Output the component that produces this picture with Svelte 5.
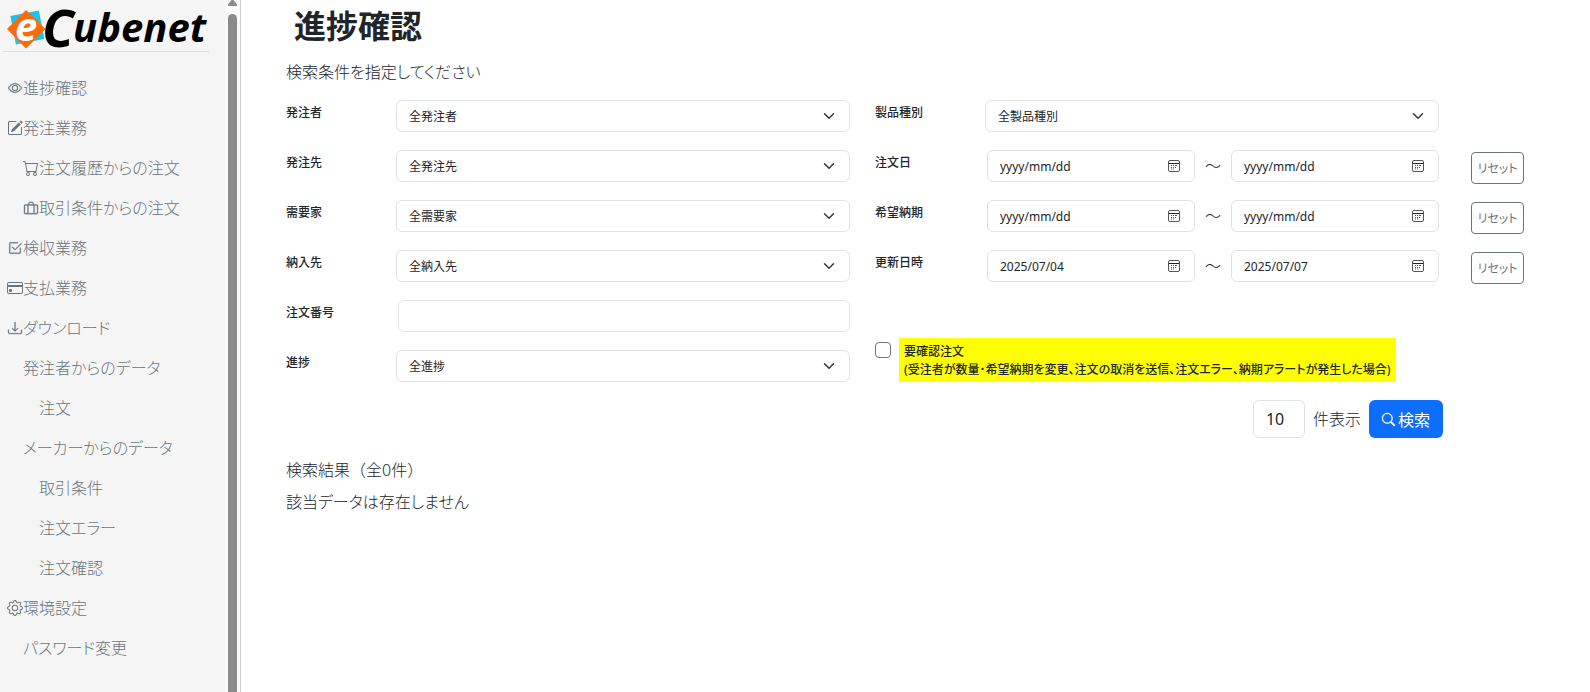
<script>
    let menu = [
        { name: '進捗確認', icon: 'eye', level: 0 },
        { name: '発注業務', icon: 'pencil', level: 0 },
        { name: '注文履歴からの注文', icon: 'cart', level: 1 },
        { name: '取引条件からの注文', icon: 'suitcase', level: 1 },
        { name: '検収業務', icon: 'check', level: 0 },
        { name: '支払業務', icon: 'card', level: 0 },
        { name: 'ダウンロード', icon: 'download', level: 0 },
        { name: '発注者からのデータ', level: 1 },
        { name: '注文', level: 2 },
        { name: 'メーカーからのデータ', level: 1 },
        { name: '取引条件', level: 2 },
        { name: '注文エラー', level: 2 },
        { name: '注文確認', level: 2 },
        { name: '環境設定', icon: 'gear', level: 0 },
        { name: 'パスワード変更', level: 1 }
    ];

    let icons = {
        eye: [
            'M16 8s-3-5.5-8-5.5S0 8 0 8s3 5.5 8 5.5S16 8 16 8M1.173 8a13 13 0 0 1 1.66-2.043C4.12 4.668 5.88 3.5 8 3.5s3.879 1.168 5.168 2.457A13 13 0 0 1 14.828 8q-.086.13-.195.288c-.335.48-.83 1.12-1.465 1.755C11.879 11.332 10.119 12.5 8 12.5s-3.879-1.168-5.168-2.457A13 13 0 0 1 1.172 8z',
            'M8 5.5a2.5 2.5 0 1 0 0 5 2.5 2.5 0 0 0 0-5M4.5 8a3.5 3.5 0 1 1 7 0 3.5 3.5 0 0 1-7 0'
        ],
        pencil: [
            'M15.502 1.94a.5.5 0 0 1 0 .706L14.459 3.69l-2-2L13.502.646a.5.5 0 0 1 .707 0l1.293 1.293zm-1.75 2.456-2-2L4.939 9.21a.5.5 0 0 0-.121.196l-.805 2.414a.25.25 0 0 0 .316.316l2.414-.805a.5.5 0 0 0 .196-.12l6.813-6.814z',
            'M1 13.5A1.5 1.5 0 0 0 2.5 15h11a1.5 1.5 0 0 0 1.5-1.5v-6a.5.5 0 0 0-1 0v6a.5.5 0 0 1-.5.5h-11a.5.5 0 0 1-.5-.5v-11a.5.5 0 0 1 .5-.5H9a.5.5 0 0 0 0-1H2.5A1.5 1.5 0 0 0 1 2.5z'
        ],
        cart: [
            'M0 1.5A.5.5 0 0 1 .5 1H2a.5.5 0 0 1 .485.379L2.89 3H14.5a.5.5 0 0 1 .491.592l-1.5 8A.5.5 0 0 1 13 12H4a.5.5 0 0 1-.491-.408L2.01 3.607 1.61 2H.5a.5.5 0 0 1-.5-.5M3.102 4l1.313 7h8.17l1.313-7zM5 12a2 2 0 1 0 0 4 2 2 0 0 0 0-4m7 0a2 2 0 1 0 0 4 2 2 0 0 0 0-4m-7 1a1 1 0 1 1 0 2 1 1 0 0 1 0-2m7 0a1 1 0 1 1 0 2 1 1 0 0 1 0-2'
        ],
        suitcase: [
            'M5 4V3a2 2 0 0 1 2-2h2a2 2 0 0 1 2 2v1h3.500A1.500 1.500 0 0 1 16 5.500v8a1.500 1.500 0 0 1-1.500 1.500h-13A1.500 1.500 0 0 1 0 13.500v-8A1.500 1.500 0 0 1 1.500 4zm1 0h4V3a1 1 0 0 0-1-1H7a1 1 0 0 0-1 1zM1.500 5a.5.5 0 0 0-.5.5v8a.5.5 0 0 0 .5.5H4V5zM5 5v9h6V5zm7 0v9h2.500a.5.5 0 0 0 .5-.5v-8a.5.5 0 0 0-.5-.5z'
        ],
        check: [
            'M3 14.500A1.500 1.500 0 0 1 1.500 13V3A1.500 1.500 0 0 1 3 1.500h8a.5.5 0 0 1 0 1H3a.5.5 0 0 0-.5.5v10a.5.5 0 0 0 .5.5h10a.5.5 0 0 0 .5-.5V8a.5.5 0 0 1 1 0v5a1.500 1.500 0 0 1-1.500 1.500z',
            'm8.354 10.354 7-7a.5.5 0 0 0-.708-.708L8 9.293 5.354 6.646a.5.5 0 1 0-.708.708l3 3a.5.5 0 0 0 .708 0'
        ],
        card: [
            'M0 4a2 2 0 0 1 2-2h12a2 2 0 0 1 2 2v8a2 2 0 0 1-2 2H2a2 2 0 0 1-2-2zm2-1a1 1 0 0 0-1 1v1h14V4a1 1 0 0 0-1-1zm13 4H1v5a1 1 0 0 0 1 1h12a1 1 0 0 0 1-1z',
            'M2 10a1 1 0 0 1 1-1h1a1 1 0 0 1 1 1v1a1 1 0 0 1-1 1H3a1 1 0 0 1-1-1z'
        ],
        download: [
            'M.5 9.900a.5.5 0 0 1 .5.5v2.500a1 1 0 0 0 1 1h12a1 1 0 0 0 1-1v-2.500a.5.5 0 0 1 1 0v2.500a2 2 0 0 1-2 2H2a2 2 0 0 1-2-2v-2.500a.5.5 0 0 1 .5-.5',
            'M7.646 11.854a.5.5 0 0 0 .708 0l3-3a.5.5 0 0 0-.708-.708L8.500 10.293V1.500a.5.5 0 0 0-1 0v8.793L5.354 8.146a.5.5 0 1 0-.708.708z'
        ],
        gear: [
            'M8 4.754a3.246 3.246 0 1 0 0 6.492 3.246 3.246 0 0 0 0-6.492M5.754 8a2.246 2.246 0 1 1 4.492 0 2.246 2.246 0 0 1-4.492 0',
            'M9.796 1.343c-.527-1.790-3.065-1.790-3.592 0l-.094.319a.873.873 0 0 1-1.255.520l-.292-.160c-1.640-.892-3.433.902-2.540 2.541l.159.292a.873.873 0 0 1-.520 1.255l-.319.094c-1.790.527-1.790 3.065 0 3.592l.319.094a.873.873 0 0 1 .520 1.255l-.160.292c-.892 1.640.901 3.434 2.541 2.540l.292-.159a.873.873 0 0 1 1.255.520l.094.319c.527 1.790 3.065 1.790 3.592 0l.094-.319a.873.873 0 0 1 1.255-.520l.292.160c1.640.893 3.434-.902 2.540-2.541l-.159-.292a.873.873 0 0 1 .520-1.255l.319-.094c1.790-.527 1.790-3.065 0-3.592l-.319-.094a.873.873 0 0 1-.520-1.255l.160-.292c.893-1.640-.902-3.433-2.541-2.540l-.292.159a.873.873 0 0 1-1.255-.520zm-2.633.283c.246-.835 1.428-.835 1.674 0l.094.319a1.873 1.873 0 0 0 2.693 1.115l.291-.160c.764-.415 1.600.420 1.184 1.185l-.159.292a1.873 1.873 0 0 0 1.116 2.692l.318.094c.835.246.835 1.428 0 1.674l-.319.094a1.873 1.873 0 0 0-1.115 2.693l.160.291c.415.764-.420 1.600-1.185 1.184l-.291-.159a1.873 1.873 0 0 0-2.693 1.116l-.094.318c-.246.835-1.428.835-1.674 0l-.094-.319a1.873 1.873 0 0 0-2.692-1.115l-.292.160c-.764.415-1.600-.420-1.184-1.185l.159-.291A1.873 1.873 0 0 0 1.945 8.930l-.319-.094c-.835-.246-.835-1.428 0-1.674l.319-.094A1.873 1.873 0 0 0 3.060 4.377l-.160-.292c-.415-.764.420-1.600 1.185-1.184l.292.159a1.873 1.873 0 0 0 2.692-1.115z'
        ]
    };

    let leftFields = [
        { id: 'orderer', label: '発注者', option: '全発注者' },
        { id: 'supplier', label: '発注先', option: '全発注先' },
        { id: 'customer', label: '需要家', option: '全需要家' },
        { id: 'delivery', label: '納入先', option: '全納入先' },
        { id: 'orderNo', label: '注文番号' },
        { id: 'progress', label: '進捗', option: '全進捗' }
    ];

    let dates = $state([
        { id: 'orderDate', label: '注文日', from: '', to: '' },
        { id: 'dueDate', label: '希望納期', from: '', to: '' },
        { id: 'updated', label: '更新日時', from: '2025/07/04', to: '2025/07/07' }
    ]);

    let orderNo = $state('');
    let needsCheck = $state(false);
    let perPage = $state('10');

    function reset(row) {
        row.from = '';
        row.to = '';
    }
</script>

{#snippet calendarButton(label)}
    <button type="button" class="calendar" aria-label={label}>
        <svg viewBox="0 0 12 12" width="12" height="12">
            <rect x="0.500" y="0.500" width="11" height="11" rx="1.500" fill="none" stroke="#555" />
            <path d="M1 3.500h10" stroke="#222" />
            <path d="M3 5.500h1m1 0h1m1 0h2M3 7.500h1m1 0h1m1 0h1M3 9h1m1 0h1" stroke="#555" />
        </svg>
    </button>
{/snippet}

<div class="page">
    <aside>
        <div class="menu-area">
            <a class="logo" href="#top" aria-label="eCubenet">
                <svg viewBox="0 0 206 50" width="206" height="50">
                    <rect x="10" y="13" width="29" height="29" fill="#1fc0ea" transform="rotate(-11 24 28)" />
                    <path d="M23 10 42.500 29 23 48.500 4 29z" fill="#ff6a06" />
                    <text x="12" y="41" font-size="40" fill="#fff">e</text>
                    <text x="39" y="47" font-size="52">C</text>
                    <text x="70" y="42" font-size="40">ubenet</text>
                </svg>
            </a>
            <nav>
                <ul>
                    {#each menu as item}
                        <li class="level{item.level}">
                            <a href="#menu">
                                {#if item.icon}
                                    <svg class={item.icon} viewBox="0 0 16 16" width="16" height="16" fill="currentColor">
                                        {#each icons[item.icon] as d}
                                            <path {d} fill-rule={item.icon === 'suitcase' ? 'evenodd' : 'nonzero'} />
                                        {/each}
                                    </svg>
                                {/if}
                                <span>{item.name}</span>
                            </a>
                        </li>
                    {/each}
                </ul>
            </nav>
        </div>
        <div class="scrollbar">
            <svg viewBox="0 0 9 6" width="9" height="6"><path d="M3.500 0h2L9 4.500V6H0V4.500z" fill="#8b8b8b" /></svg>
            <div class="thumb"></div>
        </div>
    </aside>

    <main>
        <h1>進捗確認</h1>
        <p class="lead">検索条件を指定してください</p>

        <form onsubmit={(event) => event.preventDefault()}>
            <div class="columns">
                <div class="column">
                    {#each leftFields as field}
                        <div class="row">
                            <label for={field.id}>{field.label}</label>
                            {#if field.option}
                                <select id={field.id}>
                                    <option>{field.option}</option>
                                </select>
                            {:else}
                                <div class="inset">
                                    <input id={field.id} class="box" type="text" bind:value={orderNo} />
                                </div>
                            {/if}
                        </div>
                    {/each}
                </div>

                <div class="column">
                    <div class="row with-reset">
                        <label for="productType">製品種別</label>
                        <select id="productType">
                            <option>全製品種別</option>
                        </select>
                    </div>
                    {#each dates as row}
                        <div class="row with-reset">
                            <label for={row.id}>{row.label}</label>
                            <div class="inset range">
                                <div class="date box">
                                    <input id={row.id} type="text" placeholder="yyyy/mm/dd" bind:value={row.from} />
                                    {@render calendarButton(row.label + ' 開始日')}
                                </div>
                                <span class="tilde">～</span>
                                <div class="date box">
                                    <input type="text" aria-label={row.label + ' 終了日'} placeholder="yyyy/mm/dd" bind:value={row.to} />
                                    {@render calendarButton(row.label + ' 終了日を選択')}
                                </div>
                            </div>
                            <button type="button" class="reset" onclick={() => reset(row)}>リセット</button>
                        </div>
                    {/each}
                    <div class="confirm">
                        <input id="needsCheck" type="checkbox" bind:checked={needsCheck} />
                        <label for="needsCheck">
                            要確認注文<br />
                            (受注者が数量･希望納期を変更、注文の取消を送信、注文エラー、納期アラートが発生した場合)
                        </label>
                    </div>
                </div>
            </div>

            <div class="actions">
                <input id="perPage" type="text" bind:value={perPage} />
                <label for="perPage">件表示</label>
                <button type="submit" class="search">
                    <svg viewBox="0 0 16 16" width="13" height="13" fill="currentColor" stroke="currentColor" stroke-width="0.500">
                        <path d="M11.742 10.344a6.500 6.500 0 1 0-1.397 1.398h-.001q.044.060.098.115l3.850 3.850a1 1 0 0 0 1.415-1.414l-3.850-3.850a1 1 0 0 0-.115-.100zM12 6.500a5.500 5.500 0 1 1-11 0 5.500 5.500 0 0 1 11 0" />
                    </svg>
                    <span>検索</span>
                </button>
            </div>
        </form>

        <section>
            <p class="count">検索結果（全0件）</p>
            <p>該当データは存在しません</p>
        </section>
    </main>
</div>

<style>
    :global(body) {
        background: #fff;
    }
    .page {
        display: flex;
        min-height: 100vh;
        font-family: 'Noto Sans', 'Noto Sans CJK JP', sans-serif;
        font-size: 16px;
        font-weight: 300;
        line-height: 24px;
        color: #212529;
        font-feature-settings: 'palt';
    }
    .page :is(input, select, button) {
        box-sizing: border-box;
        margin: 0;
        font-family: inherit;
        font-weight: 400;
        font-feature-settings: inherit;
        color: inherit;
    }

    /* sidebar */
    aside {
        display: flex;
        flex: none;
        width: 240px;
        border-right: 1px solid #ccc;
        background: #f5f5f5;
    }
    .menu-area {
        flex: 1;
    }
    .logo {
        display: block;
        height: 51px;
        margin: 0 16px 16px 3px;
        border-bottom: 1px solid #dcdddf;
    }
    .logo svg {
        display: block;
        overflow: visible;
    }
    .logo text {
        font-family: 'Open Sans', 'Noto Sans', sans-serif;
        font-weight: bold;
        font-style: italic;
    }
    ul {
        list-style: none;
        margin: 0;
        padding: 0;
    }
    li a {
        display: flex;
        align-items: center;
        padding: 8px 0 8px 7px;
        color: #6c757d;
        text-decoration: none;
        white-space: nowrap;
    }
    li svg {
        flex: none;
    }
    li .eye,
    li .suitcase,
    li .check,
    li .download {
        width: 14px;
        height: 14px;
        margin: 0 1px;
        stroke: currentColor;
        stroke-width: 0.4;
        overflow: visible;
    }
    .level1 a {
        padding-left: 23px;
    }
    .level2 a {
        padding-left: 39px;
    }
    .scrollbar {
        display: flex;
        flex-direction: column;
        align-items: center;
        gap: 8px;
        width: 15px;
        background: #fafafa;
    }
    .thumb {
        flex: 1;
        width: 9px;
        border-radius: 5px 5px 0 0;
        background: #8b8b8b;
    }

    /* search form */
    main {
        flex: 1;
        min-width: 0;
        padding: 7px 66px 24px 45px;
    }
    h1 {
        margin: 0 8px 15px;
        font-size: 32px;
        line-height: 38px;
        font-weight: bold;
    }
    p {
        margin: 0 0 8px;
    }
    .lead {
        margin-bottom: 16px;
    }
    .count {
        font-feature-settings: normal;
    }
    .columns {
        display: grid;
        grid-template-columns: minmax(0, 564fr) minmax(0, 649fr);
        column-gap: 25px;
    }
    .column {
        display: flex;
        flex-direction: column;
        gap: 18px;
    }
    .row {
        display: grid;
        grid-template-columns: 110px minmax(0, 1fr);
        grid-template-rows: 32px;
        height: 32px;
    }
    .with-reset {
        grid-template-columns: 110px minmax(0, 1fr) 85px;
    }
    .row label,
    .confirm label {
        font-size: 12px;
        font-weight: 500;
    }
    .row label {
        line-height: 26px;
    }
    .inset {
        display: flex;
        padding-left: 2px;
    }
    .page select,
    .box {
        box-sizing: border-box;
        width: 100%;
        height: 32px;
        padding: 0 12px;
        border: 1px solid #dee2e6;
        border-radius: 6px;
        background-color: #fff;
        font-size: 12px;
    }
    .page select {
        appearance: none;
        background-image: url("data:image/svg+xml,%3csvg xmlns='http://www.w3.org/2000/svg' viewBox='0 0 16 16'%3e%3cpath fill='none' stroke='%23343a40' stroke-linecap='round' stroke-linejoin='round' stroke-width='2' d='m2 5 6 6 6-6'/%3e%3c/svg%3e");
        background-repeat: no-repeat;
        background-position: right 14px center;
        background-size: 12px 12px;
    }
    .range {
        align-items: center;
    }
    .date {
        display: flex;
        flex: 1;
        align-items: center;
        min-width: 0;
        padding-right: 14px;
    }
    .date input {
        flex: 1;
        min-width: 0;
        padding: 0;
        border: 0;
        outline: 0;
        background: none;
        font-size: 12px;
    }
    .date input::placeholder {
        color: #212529;
        opacity: 1;
    }
    .page .calendar {
        display: flex;
        padding: 0;
        border: 0;
        background: none;
        cursor: pointer;
    }
    .tilde {
        width: 36px;
        text-align: center;
    }
    .page .reset {
        justify-self: end;
        width: 53px;
        height: 32px;
        margin-top: 2px;
        padding: 0;
        border: 1px solid #6c757d;
        border-radius: 4px;
        background: #fff;
        font-size: 12px;
        color: #6c757d;
        cursor: pointer;
    }
    .confirm {
        display: flex;
        align-items: flex-start;
        gap: 8px;
        margin-top: 38px;
    }
    .confirm input {
        flex: none;
        appearance: none;
        width: 16px;
        height: 16px;
        margin-top: 4px;
        border: 1px solid #6f7377;
        border-radius: 4px;
        background: #fff;
    }
    .confirm input:checked {
        background: #0d6efd;
    }
    .confirm label {
        padding: 5px 5px 3px;
        background: #ff0;
        line-height: 18px;
        white-space: nowrap;
    }
    .actions {
        display: flex;
        justify-content: flex-end;
        align-items: center;
        gap: 8px;
        margin: 18px 81px 20px 0;
    }
    .actions input {
        width: 52px;
        height: 38px;
        padding: 0 12px;
        border: 1px solid #dee2e6;
        border-radius: 6px;
        font-size: 16px;
    }
    .page .search {
        display: flex;
        align-items: center;
        gap: 3px;
        height: 38px;
        padding: 0 13px;
        border: 0;
        border-radius: 6px;
        background: #0d6efd;
        font-size: 16px;
        color: #fff;
        cursor: pointer;
    }
    .search svg {
        overflow: visible;
    }
</style>
